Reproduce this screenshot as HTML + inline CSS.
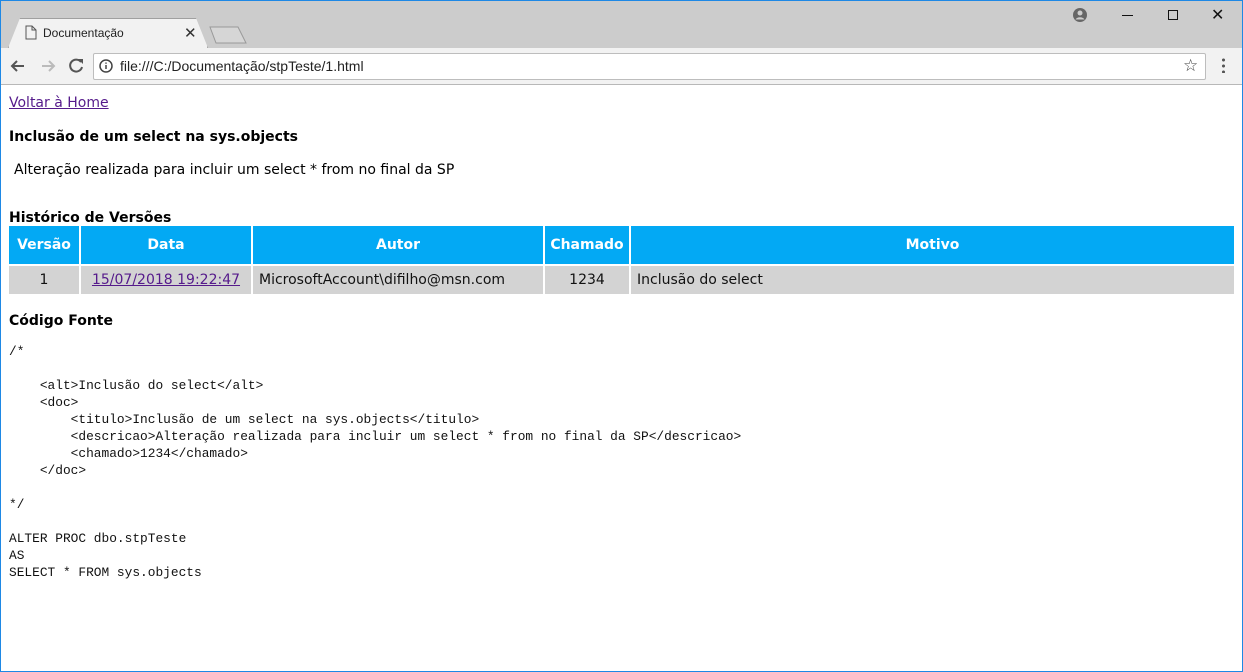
<!DOCTYPE html>
<html><head><meta charset="utf-8"><style>
*{box-sizing:border-box}
body{margin:0;width:1243px;height:672px;overflow:hidden;background:#fff;font-family:"DejaVu Sans","Liberation Sans",sans-serif;position:relative}
.frame{position:absolute;inset:0;border:1px solid #1e88e5;pointer-events:none;z-index:9}
.top{position:absolute;left:0;top:0;width:1243px;height:48px;background:#cccccc}
.tab{position:absolute;left:8px;top:18px;width:200px;height:30px;background:#f2f2f2;border:1px solid #a0a0a0;border-bottom:none;clip-path:polygon(0 100%,12px 0,188px 0,200px 100%);}
.tabtxt{position:absolute;left:43px;top:26px;font:12px "Liberation Sans",sans-serif;color:#222}
.nav{position:absolute;left:0;top:48px;width:1243px;height:37px;background:#f2f2f2;border-bottom:1px solid #b8b8b8}
.url{position:absolute;left:93px;top:53px;width:1113px;height:27px;background:#fff;border:1px solid #bdbdbd;border-radius:2px}
.urltxt{position:absolute;left:120px;top:58px;font:14px "Liberation Sans",sans-serif;color:#222}
.content{position:absolute;left:9px;top:93px;width:1226px}
a{color:#551a8b}
h4{font-size:14px;margin:0;font-weight:bold}
table{border-collapse:separate;border-spacing:2px;margin-left:-2px;width:1229px;table-layout:fixed}
th{background:#03a9f4;color:#fff;font-size:14px;height:38px;padding:0}
td{background:#d3d3d3;font-size:14px;height:28px;padding:0 6px;color:#111;white-space:nowrap}
pre{font:12.85px/17px "Liberation Mono",monospace;margin:0;color:#111}
</style></head><body>
<div class="top"></div>
<div class="tab"></div>
<svg style="position:absolute;left:25px;top:25px" width="12" height="15"><path d="M1 1h6l4 4v9H1z M7 1v4h4" fill="none" stroke="#555"/></svg>
<div class="tabtxt">Documentação</div>
<div style="position:absolute;left:184px;top:24px;font:15px sans-serif;color:#333">✕</div>
<svg style="position:absolute;left:208px;top:26px" width="40" height="20"><path d="M2 1h28l8 16H8z" fill="#d6d6d6" stroke="#999"/></svg>
<svg style="position:absolute;left:1072px;top:7px" width="16" height="16"><circle cx="8" cy="8" r="7" fill="#666"/><circle cx="8" cy="6" r="2.5" fill="#ccc"/><path d="M3.5 12.5a5 4 0 0 1 9 0" fill="#ccc"/></svg>
<div style="position:absolute;left:1122px;top:15px;width:11px;height:1px;background:#111"></div>
<div style="position:absolute;left:1168px;top:10px;width:10px;height:10px;border:1px solid #111"></div>
<div style="position:absolute;left:1211px;top:5px;font:16px sans-serif;color:#111">✕</div>
<div class="nav"></div>
<svg style="position:absolute;left:8px;top:56px" width="80" height="20"><path d="M16 10H4M9 5l-5 5 5 5" stroke="#555" stroke-width="2" fill="none"/><path d="M34 10h12M41 5l5 5-5 5" stroke="#bbb" stroke-width="2" fill="none"/><path d="M73 6a6 6 0 1 0 1 5" stroke="#555" stroke-width="2" fill="none"/><path d="M70 3h5v5z" fill="#555"/></svg>
<div class="url"></div>
<svg style="position:absolute;left:99px;top:59px" width="14" height="14"><circle cx="7" cy="7" r="6" fill="none" stroke="#444" stroke-width="1.5"/><path d="M7 6v4M7 3.5v1.3" stroke="#444" stroke-width="1.5"/></svg>
<div class="urltxt">file:///C:/Documentação/stpTeste/1.html</div>
<div style="position:absolute;left:1183px;top:56px;font:17px sans-serif;color:#444">☆</div>
<div style="position:absolute;left:1222px;top:57px;width:3px;height:16px;background:radial-gradient(circle,#555 1.4px,transparent 1.6px) 0 0/3px 6px"></div>
<div class="content">
<a href="#" style="font-size:14px;display:block;height:22px;line-height:20px">Voltar à Home</a>
<h4 style="margin-top:14px">Inclusão de um select na sys.objects</h4>
<div style="font-size:14px;margin:17px 0 0 5px">Alteração realizada para incluir um select * from no final da SP</div>
<h4 style="margin-top:32px;line-height:17px">Histórico de Versões</h4>
<table style="margin-top:-3px"><colgroup><col style="width:70px"><col style="width:170px"><col style="width:290px"><col style="width:84px"><col></colgroup>
<tr><th>Versão</th><th>Data</th><th>Autor</th><th>Chamado</th><th>Motivo</th></tr>
<tr><td style="text-align:center">1</td><td style="text-align:center;padding:0"><a href="#">15/07/2018 19:22:47</a></td><td>MicrosoftAccount\difilho@msn.com</td><td style="text-align:center">1234</td><td>Inclusão do select</td></tr></table>
<h4 style="margin-top:17px">Código Fonte</h4>
<pre style="margin-top:14px">/*

    &lt;alt&gt;Inclusão do select&lt;/alt&gt;
    &lt;doc&gt;
        &lt;titulo&gt;Inclusão de um select na sys.objects&lt;/titulo&gt;
        &lt;descricao&gt;Alteração realizada para incluir um select * from no final da SP&lt;/descricao&gt;
        &lt;chamado&gt;1234&lt;/chamado&gt;
    &lt;/doc&gt;

*/

ALTER PROC dbo.stpTeste
AS
SELECT * FROM sys.objects</pre>
</div>
<div class="frame"></div>
</body></html>
